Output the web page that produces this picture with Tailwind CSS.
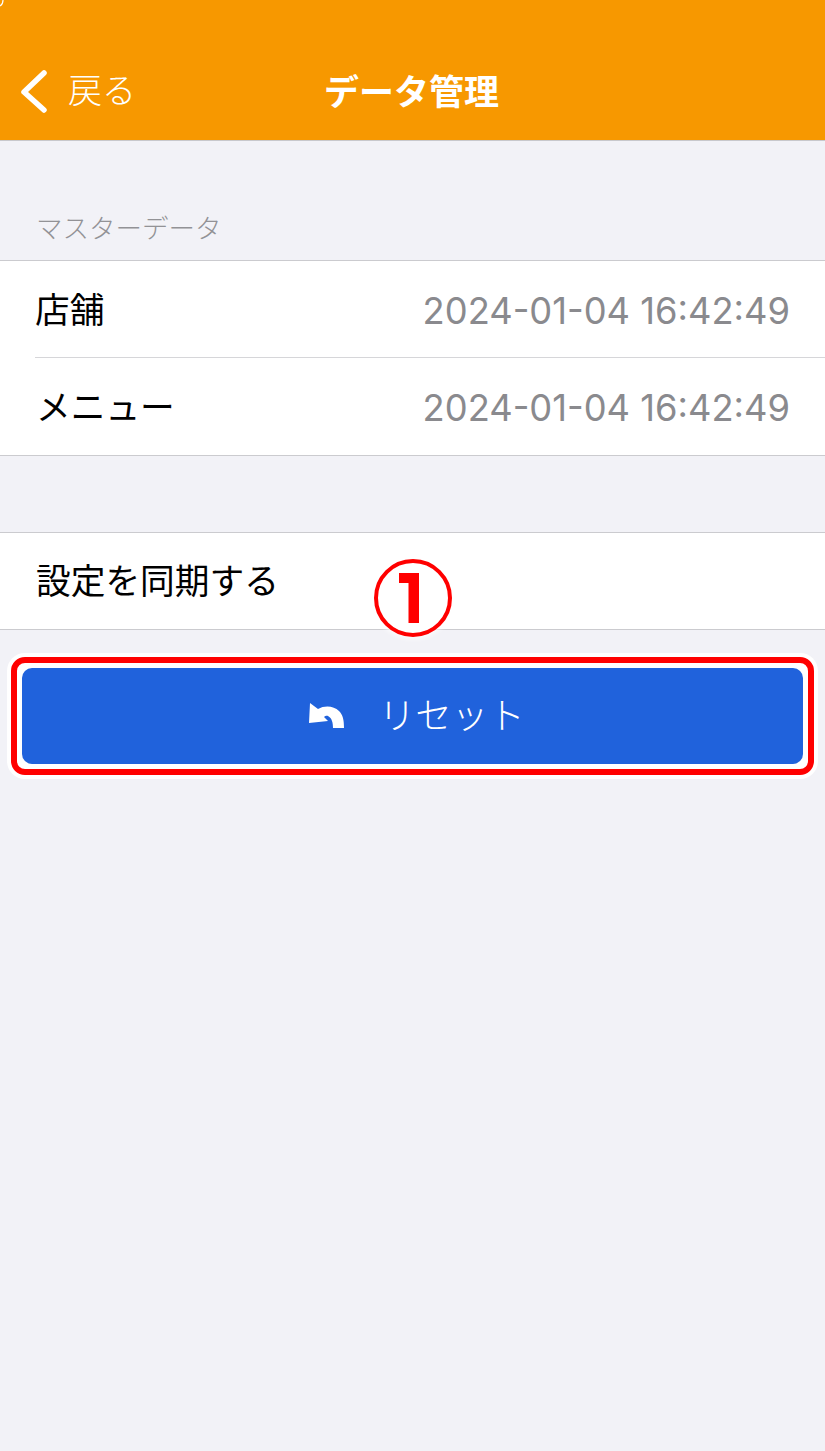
<!doctype html>
<html lang="ja">
<head>
  <meta charset="UTF-8" />
  <meta name="viewport" content="width=device-width, initial-scale=1.0" />
  <script src="https://cdn.jsdelivr.net/npm/@tailwindcss/browser@4"></script>
</head>
<body class="bg-[#f2f2f7]">
  <div class="relative w-[825px] h-[1451px] overflow-hidden bg-[#f2f2f7] font-['Inter','Noto_Sans_CJK_JP',sans-serif]">

    <!-- nav bar -->
    <div class="relative h-[141px] bg-[#f79800] border-b border-[#c8c8cc] text-white">
      <svg class="absolute left-0 top-0" width="6" height="8" viewBox="0 0 6 8" fill="none"><path d="M3 0 C3 3 2 5 0 6" stroke="#fff" stroke-width="1.2"/></svg>
      <div class="absolute left-[19px] top-[68px] flex items-center">
        <svg width="30" height="46" viewBox="0 0 30 46" fill="none"><path d="M25 5 L5 24 L25 42" stroke="#fff" stroke-width="5.5" stroke-linecap="round" stroke-linejoin="round"/></svg>
        <span class="ml-[19px] text-[34px] leading-[46px] font-light">戻る</span>
      </div>
      <div class="absolute inset-x-0 top-[69px] pr-[2px] text-center text-[35px] leading-[46px] font-semibold">データ管理</div>
    </div>

    <!-- master data -->
    <div class="pl-[36px] pt-[68px] h-[119px] text-[26.5px] leading-[38px] text-[#929296] font-light">マスターデータ</div>
    <div class="bg-white border-y border-[#cbcbcf]">
      <div class="pl-[35px]">
        <div class="h-[97px] pr-[35px] pt-[2px] flex items-center justify-between border-b border-[#d6d6d9]">
          <span class="text-[34.7px] text-black">店舗</span>
          <span class="pt-[2px] text-[36.3px] text-[#8a8a8e]">2024-01-04 16:42:49</span>
        </div>
      </div>
      <div class="h-[97px] pl-[36px] pr-[35px] pt-[2px] flex items-center justify-between">
        <span class="text-[34.7px] text-black">メニュー</span>
        <span class="pt-[2px] text-[36.3px] text-[#8a8a8e]">2024-01-04 16:42:49</span>
      </div>
    </div>

    <!-- sync -->
    <div class="mt-[76px] h-[98px] pl-[36px] flex items-center bg-white border-y border-[#cbcbcf]">
      <span class="text-[34.7px] text-black">設定を同期する</span>
    </div>

    <!-- reset button with red frame -->
    <div class="ml-[11px] mt-[27px] w-[803px] h-[118px] p-[5px] border-[6px] border-[#ff0000] rounded-[14px] bg-white shadow-[0_0_0_4px_#ffffff]">
      <div class="h-full rounded-[10px] bg-[#2062dc] flex items-center justify-center text-white pl-[9px]">
        <svg class="mr-[33.5px]" width="36" height="26" viewBox="0 0 36 26" fill="#fff"><path d="M1 0 L9 6 C16 2 25 3 30 8 C34 12 35 17 35 25 L24 25 C24 20 23 15 19 13 C18 12.500 16 13 15 14 L19 18 L0 20 Z"/></svg>
        <span class="text-[36.5px] font-light">リセット</span>
      </div>
    </div>

    <!-- annotation number -->
    <div class="absolute left-[374px] top-[559px] w-[78px] h-[78px] rounded-full bg-white border-[4px] border-[#ff0000] shadow-[0_0_5px_2px_rgba(255,255,255,0.8)] flex items-center justify-center">
      <svg class="mr-[8px]" width="20" height="50" viewBox="0 0 20 50" fill="#ff0000"><path d="M0 0 H20 V50 H9.5 V10 H0 Z"/></svg>
    </div>
  </div>
</body>
</html>
